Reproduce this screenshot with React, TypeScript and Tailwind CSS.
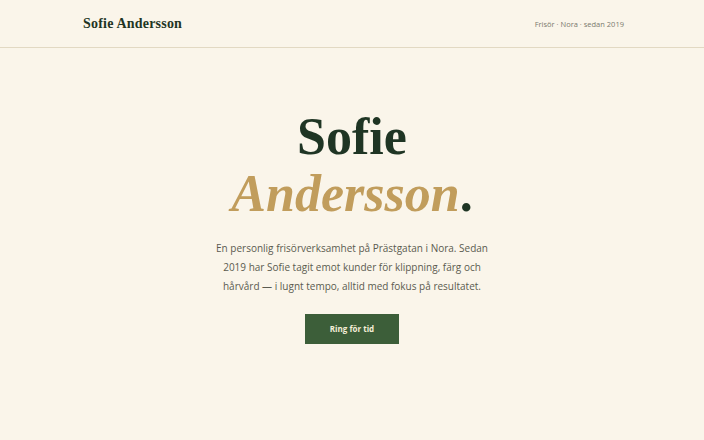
export default function App() {
  return (
    <div className="min-h-screen bg-[#faf5ea] text-[#1f3524]">
      <header className="flex h-[48px] items-center justify-between border-b border-[#e2d9c3] pl-[83px] pr-[80px]">
        <span className="font-['Liberation_Serif',serif] text-[14px] font-bold tracking-[0.2px]">
          Sofie Andersson
        </span>
        <span className="pt-[2px] font-['Open_Sans',sans-serif] text-[7.5px] text-[#7a7a6e]">
          Frisör · Nora · sedan 2019
        </span>
      </header>

      <main className="flex flex-col items-center pt-[60px] text-center">
        <h1 className="font-['Liberation_Serif',serif] text-[52px] leading-[57px] font-bold">
          <span className="block">Sofie</span>
          <span className="block">
            <em className="text-[#c19d5c]">Andersson</em>.
          </span>
        </h1>
        <p className="mt-[17px] w-[290px] font-['Open_Sans',sans-serif] text-[10px] leading-[19px] text-[#5b5b50]">
          En personlig frisörverksamhet på Prästgatan i Nora. Sedan 2019 har Sofie tagit emot kunder för klippning,
          färg och hårvård — i lugnt tempo, alltid med fokus på resultatet.
        </p>
        <button className="mt-[18px] h-[30px] w-[94px] bg-[#3c5e39] font-['Open_Sans',sans-serif] text-[8px] font-bold text-[#f5eed8]">
          Ring för tid
        </button>
      </main>
    </div>
  )
}
